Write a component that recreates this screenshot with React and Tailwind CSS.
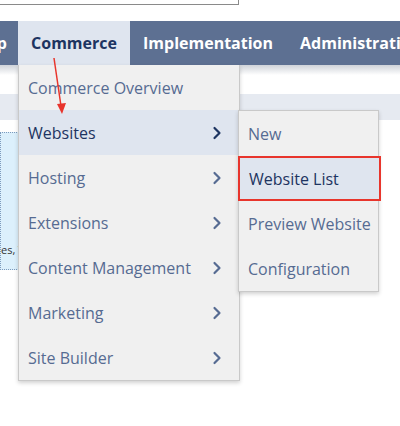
import React from 'react';

const mainItems = [
  { label: 'Commerce Overview', sub: false },
  { label: 'Websites', sub: true, active: true },
  { label: 'Hosting', sub: true },
  { label: 'Extensions', sub: true },
  { label: 'Content Management', sub: true },
  { label: 'Marketing', sub: true },
  { label: 'Site Builder', sub: true },
];

const subItems = [
  { label: 'New' },
  { label: 'Website List', active: true },
  { label: 'Preview Website' },
  { label: 'Configuration' },
];

const Chevron = ({ dark }) => (
  <svg width="10" height="14" viewBox="0 0 10 14" fill="none">
    <polyline
      points="2.5,2 7.5,7 2.5,12"
      stroke={dark ? '#1d3461' : '#566b92'}
      strokeWidth="2.2"
      strokeLinecap="round"
      strokeLinejoin="round"
    />
  </svg>
);

const App = () => {
  return (
    <div className="relative w-[400px] h-[426px] overflow-hidden bg-white font-['Open_Sans',sans-serif]">
      {/* search box edge */}
      <div className="w-[239px] h-[5px] border-r border-b border-[#8a8a8a]"></div>

      {/* top navigation */}
      <div className="mt-[16px] h-[44px] bg-[#5d7092] flex items-stretch text-[16px] font-bold text-white whitespace-nowrap">
        <div className="shrink-0 w-[18px] overflow-hidden flex justify-end items-center pr-[11px]">
          <span className="shrink-0">Setup</span>
        </div>
        <div className="shrink-0 w-[112px] bg-[#dfe5ef] text-[#1d3461] flex items-center justify-center">Commerce</div>
        <div className="shrink-0 px-[13px] flex items-center">Implementation</div>
        <div className="shrink-0 px-[14px] flex items-center">Administration</div>
      </div>

      {/* page behind the menu */}
      <div className="h-[10px] bg-gradient-to-b from-[#cfd3d9] to-white"></div>
      <div className="mt-[19px] h-[26px] bg-[#e6eaf1]"></div>
      <div className="mt-[12px] w-[19px] h-[138px] bg-[#dcf0fc] border border-dotted border-[#7d9bbd] flex items-end pb-[14px] overflow-hidden">
        <span className="text-[11px] leading-none text-[#333] whitespace-nowrap">es, V</span>
      </div>

      {/* Commerce dropdown */}
      <div className="absolute left-[18px] top-[65px] w-[222px] bg-[#f0f0f0] border border-t-0 border-[#c9c9c9] shadow-[0_2px_4px_rgba(0,0,0,0.18)]">
        {mainItems.map((item) => (
          <div
            key={item.label}
            className={`h-[45px] flex items-center justify-between pl-[9px] pr-[17px] text-[16px] ${
              item.active ? 'bg-[#dfe5ef] text-[#1d3461]' : 'text-[#566b92]'
            }`}
          >
            <span>{item.label}</span>
            {item.sub && <Chevron dark={item.active} />}
          </div>
        ))}
      </div>

      {/* Websites submenu */}
      <div className="absolute left-[238px] top-[110px] w-[141px] bg-[#f0f0f0] border border-[#c9c9c9] shadow-[0_2px_4px_rgba(0,0,0,0.18)]">
        {subItems.map((item) => (
          <div
            key={item.label}
            className={`h-[45px] flex items-center pl-[9px] text-[16px] whitespace-nowrap ${
              item.active
                ? 'bg-[#dfe5ef] text-[#1d3461] border-2 border-[#e8352c] -mx-[1px] w-[143px]'
                : 'text-[#566b92]'
            }`}
          >
            {item.label}
          </div>
        ))}
      </div>

      {/* red pointer arrow */}
      <svg className="absolute left-0 top-0 pointer-events-none" width="400" height="426">
        <line x1="54" y1="58" x2="61" y2="106" stroke="#e8352c" strokeWidth="1.5" />
        <polygon points="57,104 66,103 62,114" fill="#e8352c" />
      </svg>
    </div>
  );
};

export default App;
